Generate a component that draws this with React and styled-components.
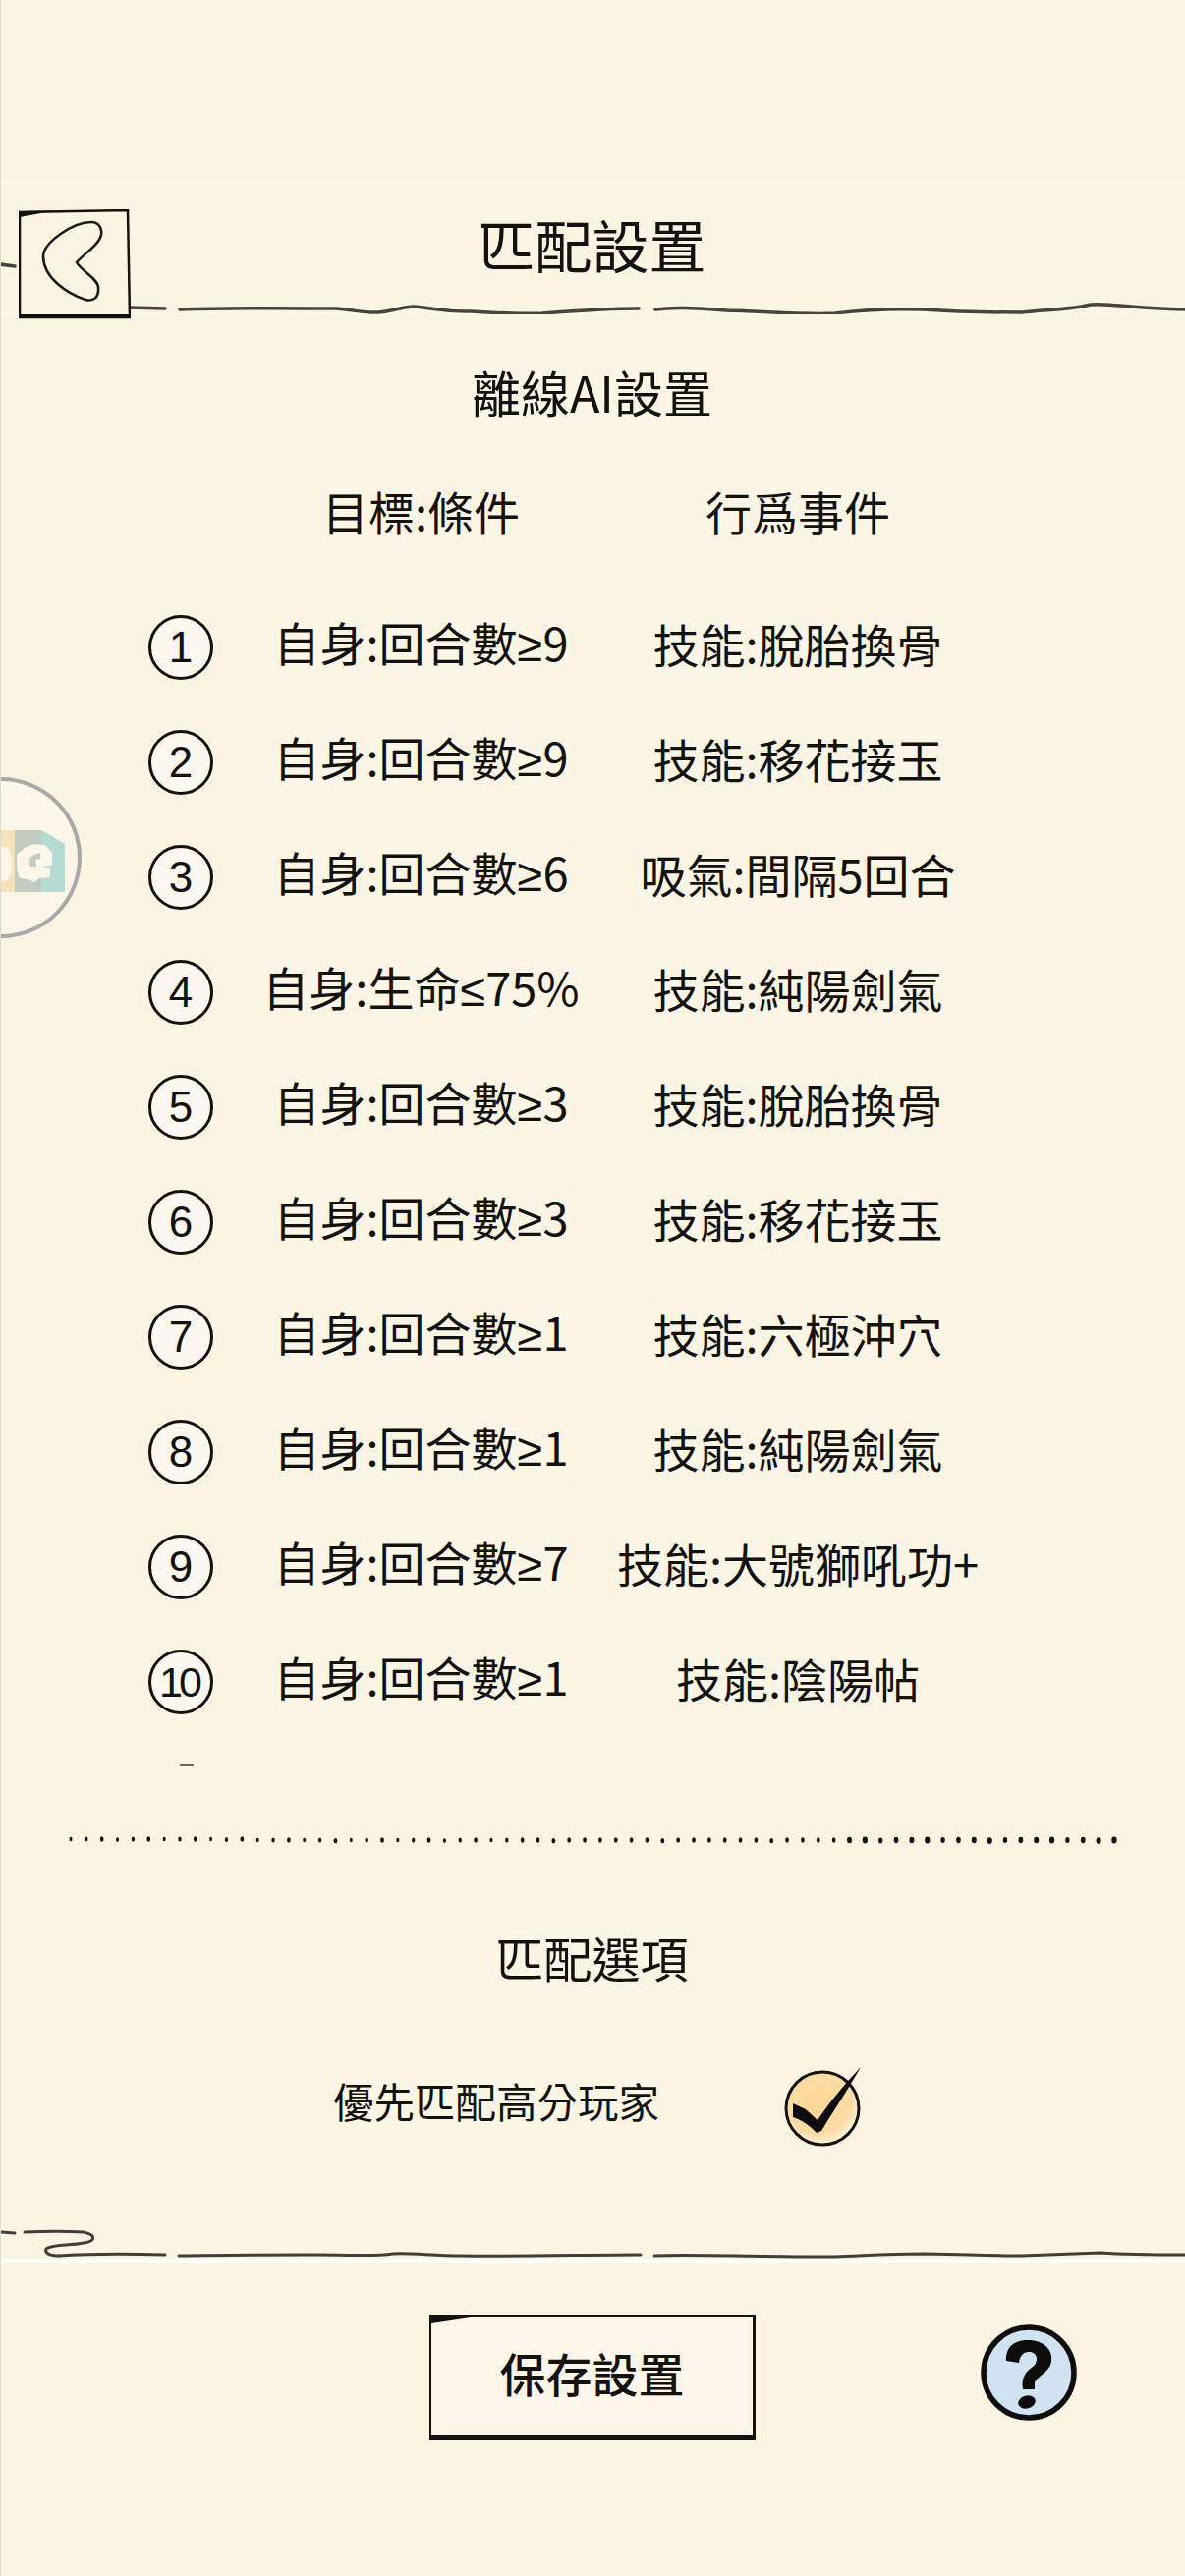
import React from "react";
import styled, { createGlobalStyle } from "styled-components";

const Global = createGlobalStyle`
  html, body { margin: 0; padding: 0; background: #fbf4e3; }
  * { box-sizing: border-box; }
`;

const Page = styled.div`
  position: relative;
  width: 1206px;
  height: 2622px;
  overflow: hidden;
  background: #fbf4e3;
  color: #141210;
  font-family: "Noto Sans CJK TC", "Noto Sans", sans-serif;
  border-left: 1px solid #dcdccb;
  display: flex;
  flex-direction: column;
`;

const TopBand = styled.div`
  height: 187px;
  flex: none;
  border-bottom: 1px solid #fffdf6;
`;

const Header = styled.header`
  height: 133px;
  flex: none;
  display: grid;
  border-bottom: 1px solid #fffdf6;
  & > * { grid-area: 1 / 1; }
`;

const HeaderRule = styled.svg`
  width: 1206px;
  height: 133px;
  margin-left: -1px;
  display: block;
`;

const BackButton = styled.button`
  justify-self: start;
  align-self: start;
  width: 114px;
  height: 112px;
  margin: 26px 0 0 18px;
  padding: 0;
  border: 0;
  background: #fbf4e3;
  z-index: 1;
`;

const Title = styled.h1`
  margin: 0;
  justify-self: center;
  align-self: start;
  margin-top: 22px;
  margin-left: -2px;
  padding: 0 6px;
  font-size: 58px;
  line-height: 78px;
  font-weight: 400;
  z-index: 1;
`;

const SectionTitle = styled.h2`
  margin: 0;
  margin-top: ${(p) => p.$gap || 0}px;
  height: ${(p) => p.$height}px;
  flex: none;
  display: flex;
  justify-content: center;
  align-items: center;
  font-size: ${(p) => p.$size}px;
  font-weight: 400;
  line-height: 64px;
  & > span {
    background: #fbf5e6;
    padding: 0 ${(p) => p.$pad}px 6px;
    margin-left: -2px;
    margin-top: -2px;
  }
`;

const Table = styled.div`
  padding-left: 150px;
  display: flex;
  flex-direction: column;
`;

const RowGrid = styled.div`
  display: grid;
  grid-template-columns: 76px 403px 364px;
  align-items: center;
  height: ${(p) => p.$height}px;
  font-size: 47px;
  line-height: 66px;
  white-space: nowrap;
`;

const Cell = styled.div`
  justify-self: center;
  background: #fbf5e6;
  padding: 0 2px 4px;
`;

const Sym = styled.span`
  font-family: "Liberation Sans", sans-serif;
`;

const RowList = styled.div`
  margin-top: 37px;
`;

const NumberCircle = styled.div`
  width: 66px;
  height: 66px;
  margin-top: 4px;
  border-radius: 50%;
  border: 3px solid #141210;
  background: #fcf7ef;
  display: flex;
  align-items: center;
  justify-content: center;
  font-family: "Liberation Sans", sans-serif;
  font-size: ${(p) => (p.$wide ? 43 : 44)}px;
  letter-spacing: ${(p) => (p.$wide ? "-4px" : "0")};
  padding-right: ${(p) => (p.$wide ? "4px" : "0")};
  line-height: 1;
`;

const TinyMark = styled.div`
  width: 14px;
  height: 2px;
  background: #6a6a62;
  margin: 27px 0 0 182px;
  flex: none;
`;

const Dotted = styled.svg`
  display: block;
  width: 1206px;
  height: 12px;
  margin: 69px 0 0 -1px;
  flex: none;
`;

const OptionRow = styled.div`
  height: 190px;
  flex: none;
  display: flex;
  align-items: flex-start;
  padding: 25px 0 0 338px;
  font-size: 41.5px;
  line-height: 56px;
`;

const OptionLabel = styled.span`
  background: #fbf5e6;
  margin-top: 9px;
  padding-bottom: 4px;
`;

const CheckIcon = styled.svg`
  width: 84px;
  height: 86px;
  margin-left: 127px;
  flex: none;
`;

const FooterRule = styled.svg`
  display: block;
  width: 1206px;
  height: 33px;
  margin: 0 0 0 -1px;
  flex: none;
`;

const Gap = styled.div`
  height: 4px;
  flex: none;
  background: #fffef9;
  margin-left: -1px;
`;

const Footer = styled.footer`
  flex: none;
  display: grid;
  grid-template-columns: 436px 332px 1fr;
  padding-top: 53px;
  align-items: start;
`;

const SaveButton = styled.button`
  grid-column: 2;
  position: relative;
  height: 128px;
  padding: 0 0 6px;
  background: #fcf6e9;
  color: #141210;
  border-style: solid;
  border-color: #141210;
  border-width: 2px 3px 6px 2px;
  font-family: inherit;
  font-size: 47px;
  font-weight: 500;
  &::before {
    content: "";
    position: absolute;
    left: 0;
    top: 0;
    width: 40px;
    height: 6px;
    background: #141210;
    clip-path: polygon(0 0, 100% 0, 0 100%);
  }
`;

const HelpIcon = styled.svg`
  width: 100px;
  height: 100px;
  margin: 9px 0 0 228px;
`;

const FloatBall = styled.div`
  position: absolute;
  left: -82px;
  top: 791px;
  width: 164px;
  height: 164px;
  border-radius: 50%;
  border: 4px solid #a9a9a9;
  background: #fbf6e7;
`;

const BallLogo = styled.svg`
  position: absolute;
  left: 77px;
  top: 47px;
  width: 68px;
  height: 68px;
`;

const rows = [
  ["自身:回合數", "≥", "9", "技能:脫胎換骨"],
  ["自身:回合數", "≥", "9", "技能:移花接玉"],
  ["自身:回合數", "≥", "6", "吸氣:間隔5回合"],
  ["自身:生命", "≤", "75%", "技能:純陽劍氣"],
  ["自身:回合數", "≥", "3", "技能:脫胎換骨"],
  ["自身:回合數", "≥", "3", "技能:移花接玉"],
  ["自身:回合數", "≥", "1", "技能:六極沖穴"],
  ["自身:回合數", "≥", "1", "技能:純陽劍氣"],
  ["自身:回合數", "≥", "7", "技能:大號獅吼功+"],
  ["自身:回合數", "≥", "1", "技能:陰陽帖"],
];

const dots = Array.from({ length: 68 }, (_, i) => ({
  x: 72 + i * 15.85,
  y: 6 + (i < 12 ? -1 : 0) + (i % 7 === 3 ? 0.6 : 0),
  r: i < 30 ? 1.5 + (i % 3) * 0.2 : i < 50 ? 1.9 : 2.2 + (i % 4) * 0.15,
}));

export default function App() {
  return (
    <Page>
      <Global />
      <TopBand />
      <Header>
        <HeaderRule viewBox="0 0 1206 133">
          <g fill="none" stroke="#45443f" strokeWidth="3.5" strokeLinecap="round">
            <path d="M0 82 L15 84" />
            <path d="M132 126 L168 127" />
            <path d="M183 128 C240 126 300 127 340 127 C360 128 370 132 385 131 C400 130 405 126 420 125 C440 126 450 131 480 130 C510 132 530 133 552 132 C590 129 620 127 650 127" />
            <path d="M667 128 C690 125 710 127 740 129 C780 130 820 134 850 132 C880 128 910 127 940 128 C980 131 1020 131 1040 131 C1070 128 1090 128 1110 123 C1130 121 1150 127 1206 128" />
          </g>
        </HeaderRule>
        <BackButton aria-label="返回">
          <svg width="114" height="112" viewBox="0 0 114 112">
            <path d="M1 3 L111 1 L113 110 L1 110 Z" fill="none" stroke="#141210" strokeWidth="2.5" />
            <path d="M1 2 L36 1.5 L1 8 Z" fill="#141210" />
            <path d="M1 107 L113 107 L113 111 L1 111 Z" fill="#141210" />
            <path
              d="M74 13 C82 13 85 20 84 26 C82 36 68 44 59 54 C63 62 80 70 81 79 C82 90 76 94 68 92 C50 86 25 70 25 48 C25 34 55 13 74 13 Z"
              fill="none"
              stroke="#1d1c1a"
              strokeWidth="2.6"
            />
          </svg>
        </BackButton>
        <Title>匹配設置</Title>
      </Header>

      <SectionTitle $height={163} $size={50} $pad={178}><span>離線AI設置</span></SectionTitle>

      <Table>
        <RowGrid $height={78}>
          <span />
          <Cell>目標:條件</Cell>
          <Cell>行爲事件</Cell>
        </RowGrid>
        <RowList>
          {rows.map((r, i) => (
            <RowGrid $height={117.1} key={i}>
              <NumberCircle $wide={i === 9}>{i + 1}</NumberCircle>
              <Cell>{r[0]}<Sym>{r[1]}</Sym>{r[2]}</Cell>
              <Cell>{r[3]}</Cell>
            </RowGrid>
          ))}
        </RowList>
      </Table>

      <TinyMark />

      <Dotted viewBox="0 0 1206 12">
        {dots.map((d, i) => (
          <ellipse key={i} cx={d.x} cy={d.y} rx={d.r} ry={d.r + 0.8} fill="#141210" />
        ))}
      </Dotted>

      <SectionTitle $gap={37} $height={160} $size={49} $pad={3}><span>匹配選項</span></SectionTitle>

      <OptionRow>
        <OptionLabel>優先匹配高分玩家</OptionLabel>
        <CheckIcon viewBox="0 0 84 86">
          <defs>
            <radialGradient id="cg" cx="0.45" cy="0.4" r="0.6">
              <stop offset="0" stopColor="#fbd897" />
              <stop offset="0.75" stopColor="#fcdca6" />
              <stop offset="1" stopColor="#fdf3dd" />
            </radialGradient>
          </defs>
          <circle cx="39" cy="45" r="37" fill="url(#cg)" stroke="#141210" strokeWidth="3" />
          <path
            d="M9 40 L22 46 L34 57 C44 42 60 22 78 3 C66 24 54 42 38 68 L33 70 C27 63 18 57 9 54 Z"
            fill="#0e0d0c"
          />
        </CheckIcon>
      </OptionRow>

      <FooterRule viewBox="0 0 1206 33">
        <g fill="none" stroke="#3f3e3a" strokeWidth="3" strokeLinecap="round">
          <path d="M0 6 L15 7" />
          <path d="M25 6 C45 5 70 5 85 6 C98 9 98 15 85 17 C72 20 52 18 47 23 C45 28 52 30 60 30" />
          <path d="M60 30 C90 28 130 28 168 29" />
          <path d="M182 30 C230 29 280 29 320 29 C360 29 380 31 400 28 C420 27 440 30 470 30 C520 31 600 29 652 29" />
          <path d="M666 30 C700 28 760 31 850 31 C880 30 900 28 940 28 C980 29 1020 30 1040 30 C1070 29 1090 28 1120 27 C1150 29 1180 29 1206 29" />
        </g>
      </FooterRule>
      <Gap />

      <Footer>
        <SaveButton>保存設置</SaveButton>
        <HelpIcon viewBox="0 0 100 100">
          <circle cx="50" cy="50" r="46" fill="#cfe3f1" stroke="#0e0d0c" strokeWidth="5.5" />
          <path
            d="M27 38 C26 22 38 16 51 17 C66 18 75 27 73 39 C71 50 60 52 56 60 L56 67 L44 67 C42 55 47 49 54 44 C60 40 60 29 50 29 C44 29 41 33 40 40 Z"
            fill="#0e0d0c"
          />
          <ellipse cx="48" cy="80" rx="9" ry="6.5" transform="rotate(-15 48 80)" fill="#0e0d0c" />
        </HelpIcon>
      </Footer>

      <FloatBall>
        <BallLogo viewBox="0 842 68 68" opacity="0.9">
          <rect x="0" y="845" width="15" height="63" fill="#f6dfb6" />
          <rect x="15" y="845" width="27" height="63" fill="#bcc7bf" />
          <path d="M42 845 L66 859 L66 908 L42 908 Z" fill="#afd9d3" />
          <path d="M0 861 L8 862 L12 872 L12 888 L8 896 L0 898 Z" fill="#fbf6e7" />
          <path
            d="M26 862 L35 859 L46 860 L53 868 L53 880 L40 884 L51 884 L51 893 L40 894 L35 898 L28 895 L20 894 L17 885 L17 870 Z"
            fill="#fbf6e7"
          />
          <path d="M34 870 L41 868 L41 874 L36 875 L37 882 L31 882 L30 874 Z" fill="#bcc7bf" />
        </BallLogo>
      </FloatBall>
    </Page>
  );
}
